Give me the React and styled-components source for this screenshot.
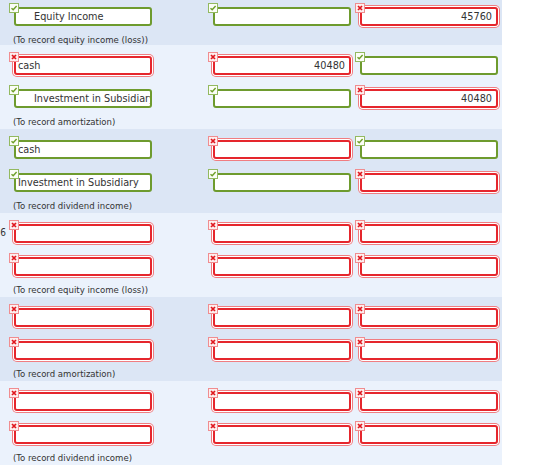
import React from 'react';
import styled, { createGlobalStyle } from 'styled-components';

const GlobalStyle = createGlobalStyle`
    body {
        margin: 0;
        background: #fff;
        font-family: "DejaVu Sans Condensed", "DejaVu Sans", "Liberation Sans", sans-serif;
        font-stretch: condensed;
        color: #333;
    }
`;

const green = '#6e9b2e';
const red = '#e5262d';

const bands = [
    {
        clipped: true,
        rows: [
            [{ ok: true, text: 'Equity Income', indent: true }, { ok: true }, { text: '45760', num: true }],
        ],
        note: '(To record equity income (loss))',
    },
    {
        rows: [
            [{ text: 'cash' }, { text: '40480', num: true }, { ok: true }],
            [{ ok: true, text: 'Investment in Subsidiary', indent: true }, { ok: true }, { text: '40480', num: true }],
        ],
        note: '(To record amortization)',
    },
    {
        rows: [
            [{ ok: true, text: 'cash' }, {}, { ok: true }],
            [{ ok: true, text: 'Investment in Subsidiary' }, { ok: true }, {}],
        ],
        note: '(To record dividend income)',
    },
    {
        label: '16',
        rows: [[{}, {}, {}], [{}, {}, {}]],
        note: '(To record equity income (loss))',
    },
    {
        rows: [[{}, {}, {}], [{}, {}, {}]],
        note: '(To record amortization)',
    },
    {
        rows: [[{}, {}, {}], [{}, {}, {}]],
        note: '(To record dividend income)',
    },
];

// 체크 / 엑스 표시 아이콘
const Badge = ({ ok }) => (
    <BadgeBox ok={ok}>
        <svg width="8" height="8" viewBox="0 0 8 8">
            {ok ? (
                <polyline points="1.5,4.2 3.2,5.8 6.6,2" fill="none" stroke="#6f9f2a" strokeWidth="1.4" />
            ) : (
                <path d="M2,2 L6,6 M6,2 L2,6" stroke="#e0181f" strokeWidth="1.7" />
            )}
        </svg>
    </BadgeBox>
);

const Field = ({ ok, text, num, indent }) => (
    <Cell>
        <Box ok={ok} num={num} indent={indent}>{text}</Box>
        <Badge ok={ok} />
    </Cell>
);

const App = () => (
    <Page>
        <GlobalStyle />
        {bands.map((band, i) => (
            <Band key={i} shade={i % 2 === 0} clipped={band.clipped}>
                <Rows>
                    {band.rows.map((row, j) => (
                        <Row key={j}>
                            <Label>{j === 0 ? band.label : null}</Label>
                            {row.map((cell, k) => (
                                <Field key={k} {...cell} />
                            ))}
                        </Row>
                    ))}
                </Rows>
                <Note>{band.note}</Note>
            </Band>
        ))}
    </Page>
);

const Page = styled.div`
    width: 502px;
    overflow: hidden;
`;

const Band = styled.div`
    box-sizing: border-box;
    height: ${p => (p.clipped ? 51 : 84)}px;
    margin-top: ${p => (p.clipped ? -6 : 0)}px;
    padding-top: ${p => (p.clipped ? 9 : 7)}px;
    background: ${p => (p.shade ? '#dce6f5' : '#ebf2fc')};
`;

const Rows = styled.div`
    display: grid;
    row-gap: 8px;
`;

const Row = styled.div`
    display: grid;
    grid-template-columns: 14px 199px 147px 138px;
    align-items: start;
`;

const Label = styled.div`
    display: flex;
    justify-content: flex-end;
    padding-right: 8px;
    padding-top: 7px;
    font-size: 10px;
    white-space: nowrap;
`;

const Cell = styled.div`
    position: relative;
    width: 138px;
    padding-top: 4px;
    height: 25px;
    box-sizing: border-box;
`;

const Box = styled.div`
    box-sizing: border-box;
    height: 19px;
    border: 2px solid ${p => (p.ok ? green : red)};
    border-radius: 3px;
    background: #fff;
    box-shadow: ${p => (p.ok ? 'none' : `0 0 0 1px #fff, 0 0 0 2px #f07d81`)};
    display: flex;
    align-items: center;
    justify-content: ${p => (p.num ? 'flex-end' : 'flex-start')};
    padding: 0 4px 0 ${p => (p.indent ? 18 : 2)}px;
    font-size: 10.8px;
    color: #333;
    white-space: nowrap;
    overflow: hidden;
`;

const BadgeBox = styled.div`
    position: absolute;
    left: -5px;
    top: 0;
    width: 10px;
    height: 10px;
    box-sizing: border-box;
    border: 1px solid ${p => (p.ok ? '#93b960' : '#f08d90')};
    background: ${p => (p.ok ? '#fbfdf7' : '#fdeeee')};
    display: flex;
    align-items: center;
    justify-content: center;
`;

const Note = styled.div`
    margin-top: 4px;
    padding-left: 13px;
    line-height: 15px;
    font-size: 9.5px;
    color: #333;
`;

export default App;
